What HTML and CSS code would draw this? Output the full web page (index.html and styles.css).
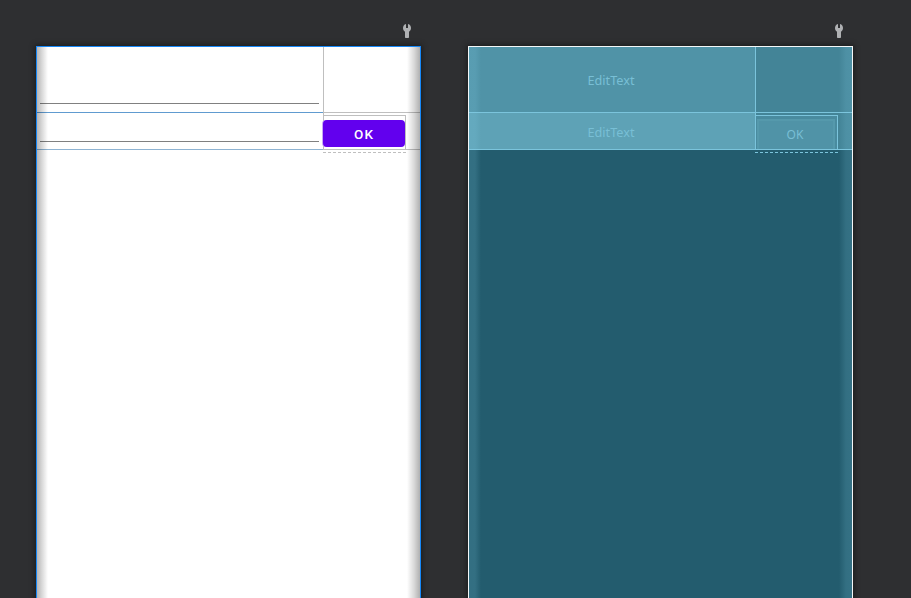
FILE: index.html
```html
<!DOCTYPE html>
<html lang="en">
<head>
<meta charset="utf-8">
<title>Layout editor</title>
<link rel="stylesheet" href="styles.css">
</head>
<body>
<main class="editor">
  <section class="surface">
    <div class="toolbar"><svg class="wrench" viewBox="0 0 10 14"><path d="M4 0v4h2V0C8 .6 9 2.2 9 4c0 1.6-.8 2.9-2 3.7V13c0 .6-.4 1-1 1H4c-.6 0-1-.4-1-1V7.700C1.800 6.900 1 5.600 1 4 1 2.200 2 .6 4 0z"/></svg></div>
    <div class="device design">
      <div class="cell field tall"><span class="underline"></span></div>
      <div class="cell spacer"></div>
      <div class="cell field short"><span class="underline"></span></div>
      <div class="cell action"><div class="bounds"><button class="button">OK</button></div></div>
    </div>
  </section>
  <section class="surface">
    <div class="toolbar"><svg class="wrench" viewBox="0 0 10 14"><path d="M4 0v4h2V0C8 .6 9 2.200 9 4c0 1.600-.8 2.900-2 3.700V13c0 .6-.4 1-1 1H4c-.6 0-1-.4-1-1V7.700C1.800 6.900 1 5.600 1 4 1 2.200 2 .6 4 0z"/></svg></div>
    <div class="device blueprint">
      <div class="cell field tall"><span class="label">EditText</span></div>
      <div class="cell spacer"></div>
      <div class="cell field short"><span class="label">EditText</span></div>
      <div class="cell action"><div class="bounds"><div class="button">OK</div></div></div>
    </div>
  </section>
</main>
</body>
</html>
```
FILE: styles.css
```css
* { box-sizing: border-box; }
body { margin: 0; background: #2e2f31; overflow: hidden; }
.editor { display: flex; gap: 47px; height: 598px; padding-left: 36px; overflow: hidden; }
.surface { width: 385px; flex: none; }
.toolbar { height: 46px; padding: 24px 9px 0 0; display: flex; justify-content: flex-end; }
.wrench { width: 10px; height: 14px; fill: #afb1b3; }
.device {
  position: relative;
  display: grid;
  grid-template-columns: 286px 97px;
  grid-template-rows: 66px 37px;
  height: 600px;
  border: 1px solid;
  box-shadow: 0 0 5px 1px #1b1c1d;
}
.device::after { content: ""; position: absolute; inset: 0; pointer-events: none; }
.cell { border-bottom: 1px solid; }
.spacer, .action { border-left: 1px solid; }
.field { display: flex; }
.bounds {
  position: relative;
  width: 83px;
  height: 34px;
  margin: 2px 0 0 -1px;
  border: 1px solid;
  border-bottom: 0;
}
.bounds::after {
  content: "";
  position: absolute;
  top: 36px;
  left: -1px;
  width: 83px;
  border-top: 1px dashed;
  border-color: inherit;
}

.design { background: #fff; border-color: #1788f8; }
.design::after {
  background:
    linear-gradient(to right, rgba(0,0,0,.29), rgba(0,0,0,.15) 5px, transparent 11px),
    linear-gradient(to left, rgba(0,0,0,.31), rgba(0,0,0,.15) 6px, transparent 13px);
}
.design .cell { border-color: #bfbfbf; }
.design .field { border-bottom-color: #609bd0; padding: 0 4px 8px 3px; align-items: flex-end; }
.design .short { padding-bottom: 7px; border-bottom-color: #8eb3d2; }
.design .underline { width: 100%; height: 1px; background: #808080; }
.design .bounds { border-color: #bfbfbf; }
.design .button {
  display: block;
  width: 82px;
  height: 27px;
  margin: 4px 0 0 -1px;
  padding: 1px 0 0;
  border: 0;
  border-radius: 4px;
  background: #6200ee;
  box-shadow: -1px 0 #c6a9f5;
  color: #fff;
  font: 500 13.5px/26px Roboto, sans-serif;
  letter-spacing: 1px;
}

.blueprint { background: #235c6e; border-color: #f4f7f8; }
.blueprint::after {
  background:
    linear-gradient(to right, rgba(130,205,230,.17), rgba(130,205,230,.17) 6px, transparent 12px),
    linear-gradient(to left, rgba(130,205,230,.19), rgba(130,205,230,.17) 6px, transparent 13px);
}
.blueprint .cell { border-color: #7bc4dc; color: #78bfd5; font: 12.7px "Noto Sans", sans-serif; }
.blueprint .field { justify-content: center; align-items: center; }
.blueprint .tall { background: #5093a7; padding-top: 1px; }
.blueprint .short { background: #5ea2b6; padding-top: 2px; }
.blueprint .label { padding-right: 2px; }
.blueprint .spacer { background: #438497; }
.blueprint .action { background: #438497; }
.blueprint .bounds { border-color: #7bc4dc; padding: 3px 2px 0 1px; background: #498b9f; }
.blueprint .button {
  height: 30px;
  padding-right: 2px;
  border: 2px solid #5599ac;
  border-bottom: 0;
  background: #5093a7;
  font-size: 12px;
  text-align: center;
  line-height: 27px;
}
```
